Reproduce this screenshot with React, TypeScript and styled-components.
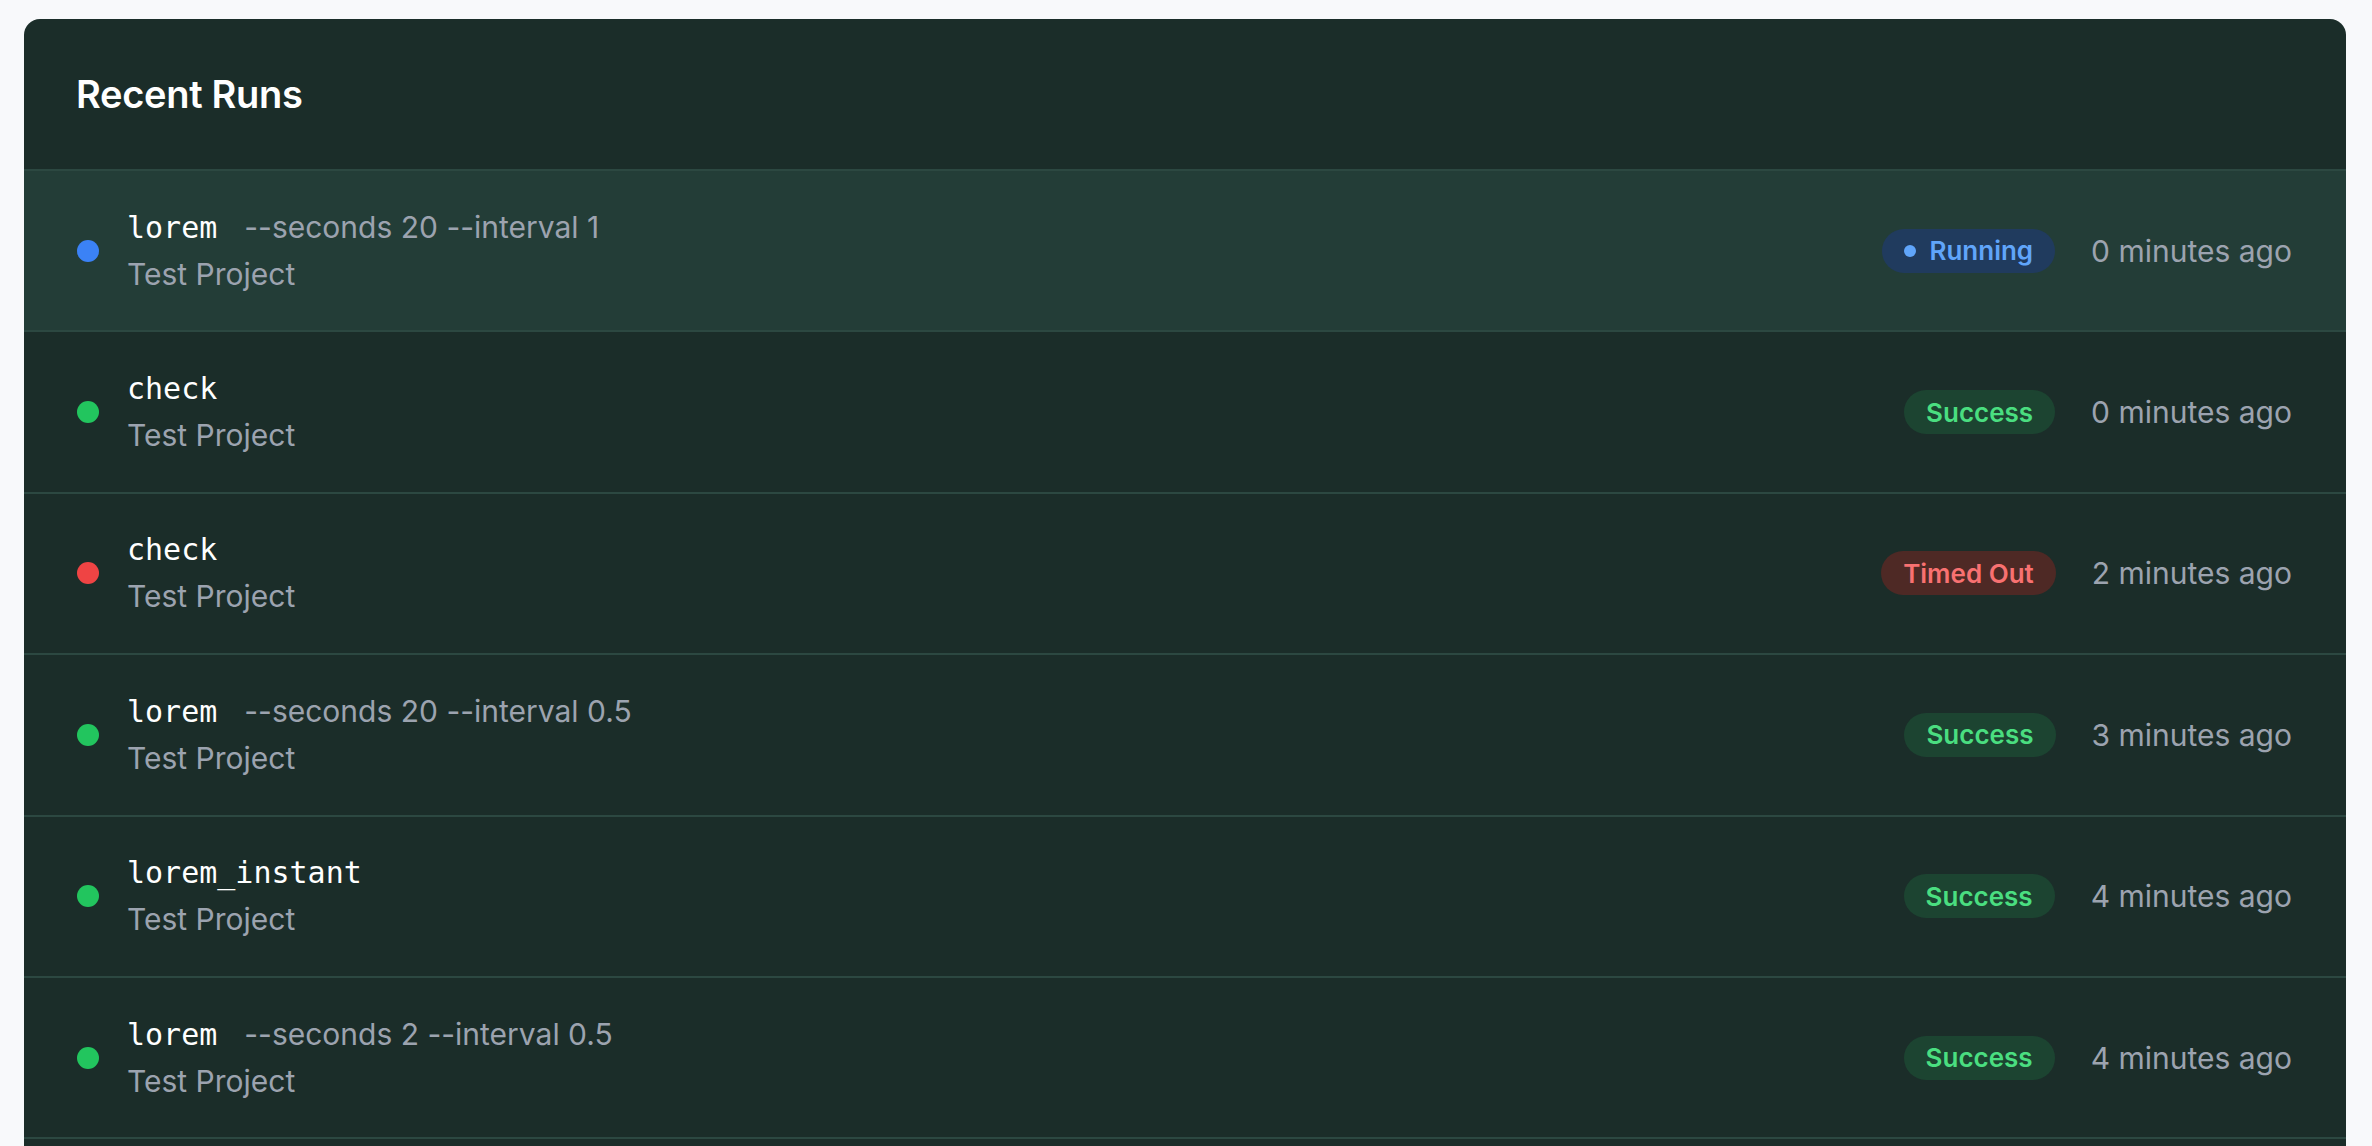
import React from "react";
import styled, { createGlobalStyle } from "styled-components";

type RunStatus = "running" | "success" | "timeout";

interface Run {
    command: string,
    args?: string,
    project: string,
    status: RunStatus,
    when: string,
    active?: boolean,
}

const runs: Run[] = [
    { command: "lorem", args: "--seconds 20 --interval 1", project: "Test Project", status: "running", when: "0 minutes ago", active: true },
    { command: "check", project: "Test Project", status: "success", when: "0 minutes ago" },
    { command: "check", project: "Test Project", status: "timeout", when: "2 minutes ago" },
    { command: "lorem", args: "--seconds 20 --interval 0.5", project: "Test Project", status: "success", when: "3 minutes ago" },
    { command: "lorem_instant", project: "Test Project", status: "success", when: "4 minutes ago" },
    { command: "lorem", args: "--seconds 2 --interval 0.5", project: "Test Project", status: "success", when: "4 minutes ago" },
];

const dotColor: Record<RunStatus, string> = {
    running: "#3b82f6",
    success: "#22c55e",
    timeout: "#ef4444",
};

const badgeColors: Record<RunStatus, { bg: string, fg: string }> = {
    running: { bg: "#203b5e", fg: "#60a5fa" },
    success: { bg: "#1c4431", fg: "#4ade80" },
    timeout: { bg: "#4e2925", fg: "#f87171" },
};

const badgeLabel: Record<RunStatus, string> = {
    running: "Running",
    success: "Success",
    timeout: "Timed Out",
};

const GlobalStyle = createGlobalStyle`
    html, body {
        margin: 0;
        padding: 0;
        background: #f8f9fb;
        font-family: Inter, "Noto Sans", sans-serif;
    }
    * { box-sizing: border-box; }
`;

const Page = styled.div`
    padding: 19px 26px 0 24px;
    height: 1146px;
    overflow: hidden;
`;

const Card = styled.section`
    background: #1b2d29;
    border-radius: 16px;
    overflow: hidden;
    padding-bottom: 60px;
`;

const Header = styled.header`
    padding: 50px 52px;
`;

const Title = styled.h2`
    margin: 0;
    font-size: 38px;
    line-height: 50px;
    font-weight: 600;
    color: #ffffff;
    letter-spacing: -0.3px;
`;

const Row = styled.div<{ $active?: boolean }>`
    display: flex;
    align-items: center;
    height: 161.4px;
    padding: 0 54px 0 53px;
    border-top: 2px solid #2c4841;
    background: ${(p) => (p.$active ? "#233d37" : "transparent")};

    &:last-child {
        border-bottom: 2px solid #2c4841;
        height: 163.4px;
    }
`;

const Dot = styled.span<{ $color: string }>`
    width: 22px;
    height: 22px;
    border-radius: 50%;
    flex-shrink: 0;
    background: ${(p) => p.$color};
`;

const Info = styled.div`
    display: flex;
    flex-direction: column;
    margin-left: 28px;
    flex: 1;
`;

const CommandLine = styled.div`
    display: flex;
    align-items: baseline;
    line-height: 42px;
`;

const Command = styled.span`
    font-family: "DejaVu Sans Mono", "Liberation Mono", monospace;
    font-size: 30px;
    color: #ffffff;
`;

const Args = styled.span`
    margin-left: 27px;
    font-size: 30px;
    color: #9ca3af;
`;

const Project = styled.div`
    margin-top: 4px;
    font-size: 30px;
    line-height: 42px;
    color: #9ca3af;
`;

const Meta = styled.div`
    display: flex;
    align-items: center;
    gap: 36px;
`;

const Badge = styled.span<{ $status: RunStatus }>`
    display: inline-flex;
    align-items: center;
    gap: 13px;
    height: 44px;
    padding: 0 22px;
    border-radius: 999px;
    font-size: 26px;
    font-weight: 600;
    background: ${(p) => badgeColors[p.$status].bg};
    color: ${(p) => badgeColors[p.$status].fg};
`;

const BadgeDot = styled.span`
    width: 12px;
    height: 12px;
    border-radius: 50%;
    background: currentColor;
`;

const When = styled.span`
    font-size: 30px;
    color: #9ca3af;
`;

const RunRow = ({ run }: { run: Run }): JSX.Element => (
    <Row $active={run.active}>
        <Dot $color={dotColor[run.status]} />
        <Info>
            <CommandLine>
                <Command>{run.command}</Command>
                {run.args && <Args>{run.args}</Args>}
            </CommandLine>
            <Project>{run.project}</Project>
        </Info>
        <Meta>
            <Badge $status={run.status}>
                {run.status === "running" && <BadgeDot />}
                {badgeLabel[run.status]}
            </Badge>
            <When>{run.when}</When>
        </Meta>
    </Row>
);

const App = (): JSX.Element => {
    return (
        <Page>
            <GlobalStyle />
            <Card>
                <Header>
                    <Title>Recent Runs</Title>
                </Header>
                <div>
                    {runs.map((r, i) => <RunRow key={i} run={r} />)}
                </div>
            </Card>
        </Page>
    );
};

export default App;
